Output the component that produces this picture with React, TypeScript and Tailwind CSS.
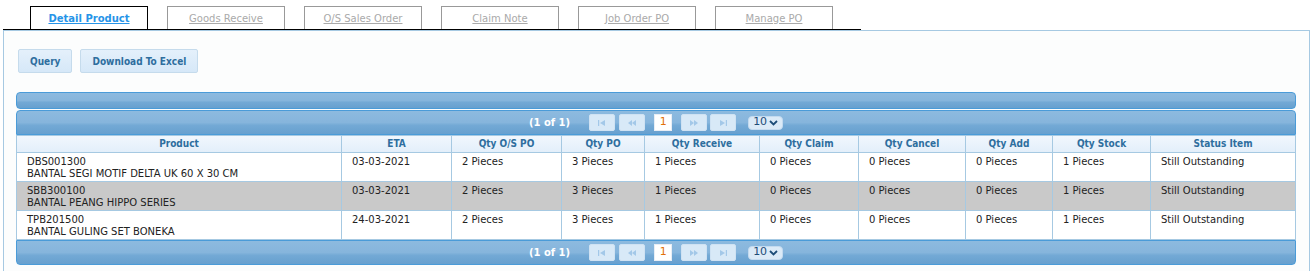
import React from "react";

interface Item {
  code: string;
  name: string;
  eta: string;
  qtyOs: string;
  qtyPo: string;
  qtyReceive: string;
  qtyClaim: string;
  qtyCancel: string;
  qtyAdd: string;
  qtyStock: string;
  status: string;
}

const tabs = ["Detail Product", "Goods Receive", "O/S Sales Order", "Claim Note", "Job Order PO", "Manage PO"];

const columns = [
  { title: "Product", width: 325 },
  { title: "ETA", width: 110 },
  { title: "Qty O/S PO", width: 110 },
  { title: "Qty PO", width: 83 },
  { title: "Qty Receive", width: 115 },
  { title: "Qty Claim", width: 99 },
  { title: "Qty Cancel", width: 107 },
  { title: "Qty Add", width: 87 },
  { title: "Qty Stock", width: 98 },
  { title: "Status Item", width: 145 },
];

const items: Item[] = [
  {
    code: "DBS001300",
    name: "BANTAL SEGI MOTIF DELTA UK 60 X 30 CM",
    eta: "03-03-2021",
    qtyOs: "2 Pieces",
    qtyPo: "3 Pieces",
    qtyReceive: "1 Pieces",
    qtyClaim: "0 Pieces",
    qtyCancel: "0 Pieces",
    qtyAdd: "0 Pieces",
    qtyStock: "1 Pieces",
    status: "Still Outstanding",
  },
  {
    code: "SBB300100",
    name: "BANTAL PEANG HIPPO SERIES",
    eta: "03-03-2021",
    qtyOs: "2 Pieces",
    qtyPo: "3 Pieces",
    qtyReceive: "1 Pieces",
    qtyClaim: "0 Pieces",
    qtyCancel: "0 Pieces",
    qtyAdd: "0 Pieces",
    qtyStock: "1 Pieces",
    status: "Still Outstanding",
  },
  {
    code: "TPB201500",
    name: "BANTAL GULING SET BONEKA",
    eta: "24-03-2021",
    qtyOs: "2 Pieces",
    qtyPo: "3 Pieces",
    qtyReceive: "1 Pieces",
    qtyClaim: "0 Pieces",
    qtyCancel: "0 Pieces",
    qtyAdd: "0 Pieces",
    qtyStock: "1 Pieces",
    status: "Still Outstanding",
  },
];

// header bars share the same glossy blue look
const barBg =
  "bg-[linear-gradient(to_bottom,#8dbadf_0%,#86b5dc_50%,#73a9d5_62%,#67a0cf_100%)] border border-[#4a9bd8]";

const PageIcon = ({ kind }: { kind: "first" | "prev" | "next" | "last" }) => {
  const c = "#a3c8e8";
  return (
    <svg width="10" height="6" viewBox="0 0 10 6">
      {kind === "first" && (
        <>
          <rect x="1" y="0" width="1.2" height="6" fill={c} />
          <polygon points="8,0 8,6 3,3" fill={c} />
        </>
      )}
      {kind === "prev" && (
        <>
          <polygon points="5,0 5,6 1,3" fill={c} />
          <polygon points="9,0 9,6 5,3" fill={c} />
        </>
      )}
      {kind === "next" && (
        <>
          <polygon points="1,0 1,6 5,3" fill={c} />
          <polygon points="5,0 5,6 9,3" fill={c} />
        </>
      )}
      {kind === "last" && (
        <>
          <polygon points="2,0 2,6 7,3" fill={c} />
          <rect x="7.8" y="0" width="1.2" height="6" fill={c} />
        </>
      )}
    </svg>
  );
};

const PageButton = ({ kind }: { kind: "first" | "prev" | "next" | "last" }) => (
  <span className="flex h-[17px] w-[26px] items-center justify-center rounded-[2px] border border-[#cfe2f3] bg-[#d8e9f7]">
    <PageIcon kind={kind} />
  </span>
);

const Paginator = ({ rounded }: { rounded: string }) => (
  <div className={`flex h-[25px] items-center justify-center ${barBg} ${rounded}`}>
    <span className="mr-[19px] text-[10px] font-bold text-white">(1 of 1)</span>
    <div className="flex gap-[4px]">
      <PageButton kind="first" />
      <PageButton kind="prev" />
    </div>
    <span className="mx-[9px] flex h-[17px] w-[18px] items-center justify-center border border-[#e8eef5] bg-white text-[11px] text-[#e17009]">
      1
    </span>
    <div className="flex gap-[3px]">
      <PageButton kind="next" />
      <PageButton kind="last" />
    </div>
    <span className="ml-[12px] flex h-[14px] w-[35px] items-center justify-center gap-[2px] rounded-[4px] border border-[#c3daef] bg-[#dbeaf7] text-[11px] text-[#1e4d78]">
      10
      <svg width="9" height="6" viewBox="0 0 9 6">
        <polyline points="1,1 4.5,4.5 8,1" fill="none" stroke="#1e4d78" strokeWidth="1.8" />
      </svg>
    </span>
  </div>
);

export default function App() {
  return (
    <div className="min-h-[271px] bg-white pl-[3px] font-['DejaVu_Sans',sans-serif] text-[10px] text-[#222]">
      <div className="w-[858px] pt-[6px]">
        <ul className="flex gap-[19px] border-b border-black pl-[27px]">
          {tabs.map((t, i) => (
            <li
              key={t}
              className={`flex h-[23px] w-[118px] items-center justify-center border border-b-0 ${
                i === 0 ? "border-black font-bold text-[#2694e8]" : "border-[#999] text-[#aaa]"
              }`}
            >
              <span className="underline">{t}</span>
            </li>
          ))}
        </ul>
      </div>
      <div className="mr-[5px] border border-[#a6c9e2] bg-[#fcfdfd] px-[12px] pb-[20px] pt-[18px]">
        <div className="ml-[2px] flex gap-[8px]">
          {["Query", "Download To Excel"].map((b) => (
            <button
              key={b}
              className="h-[24px] rounded-[2px] border border-[#c5dbec] bg-[linear-gradient(to_bottom,#e4f0fb,#d6e8f8)] px-[11px] font-['DejaVu_Sans_Condensed',sans-serif] text-[10px] font-bold text-[#2e6e9e]"
            >
              {b}
            </button>
          ))}
        </div>
        <div className="mt-[19px] w-[1280px]">
          <div className={`h-[17px] rounded-[4px] ${barBg}`} />
          <div className="h-[1px]" />
          <Paginator rounded="rounded-t-[4px]" />
          <table className="w-[1280px] table-fixed border-collapse">
            <colgroup>
              {columns.map((c) => (
                <col key={c.title} style={{ width: c.width }} />
              ))}
            </colgroup>
            <thead>
              <tr className="bg-[linear-gradient(to_bottom,#f1f7fd,#e2eefa)]">
                {columns.map((c) => (
                  <th
                    key={c.title}
                    className="h-[17px] border border-[#a6c9e2] p-0 text-center font-['DejaVu_Sans_Condensed',sans-serif] text-[10px] leading-[12px] font-bold text-[#2e6e9e]"
                  >
                    {c.title}
                  </th>
                ))}
              </tr>
            </thead>
            <tbody>
              {items.map((it, idx) => {
                const cells = [
                  it.eta,
                  it.qtyOs,
                  it.qtyPo,
                  it.qtyReceive,
                  it.qtyClaim,
                  it.qtyCancel,
                  it.qtyAdd,
                  it.qtyStock,
                  it.status,
                ];
                return (
                  <tr key={it.code} className={idx === 1 ? "bg-[#c9c9c9]" : "bg-white"}>
                    <td className="h-[29px] border border-[#a6c9e2] px-[10px] pb-[1px] pt-[3px] align-top leading-[12px]">
                      {it.code}
                      <br />
                      {it.name}
                    </td>
                    {cells.map((v, i) => (
                      <td
                        key={i}
                        className="border border-[#a6c9e2] px-[10px] pb-[1px] pt-[3px] align-top leading-[12px]"
                      >
                        {v}
                      </td>
                    ))}
                  </tr>
                );
              })}
            </tbody>
          </table>
          <Paginator rounded="rounded-b-[4px]" />
        </div>
      </div>
    </div>
  );
}
